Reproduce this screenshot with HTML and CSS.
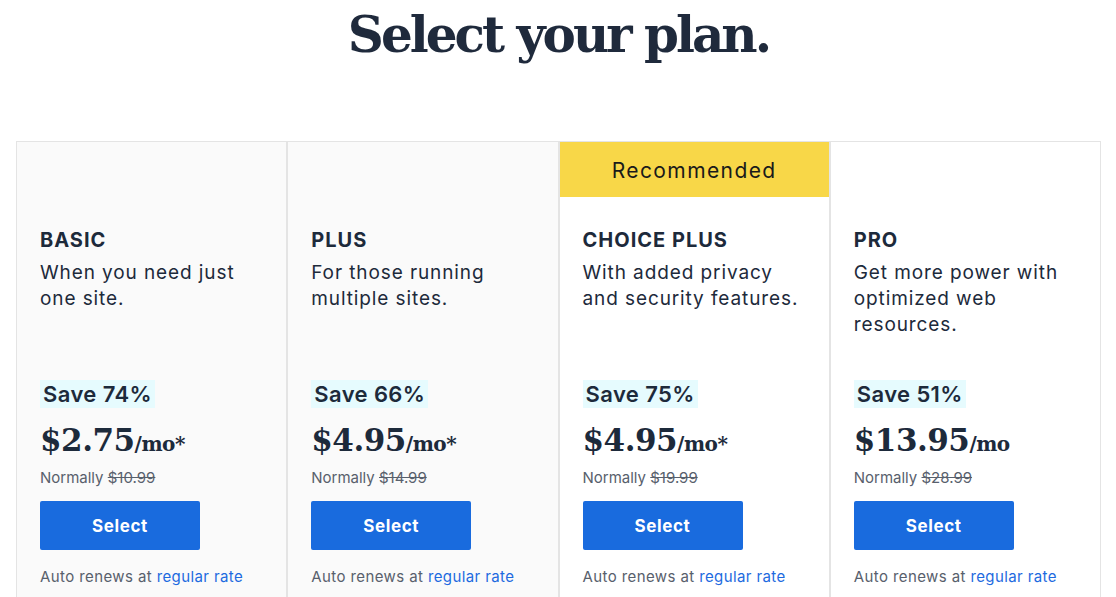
FILE: index.html
```html
<!DOCTYPE html>
<html lang="en">
<head>
    <meta charset="UTF-8">
    <meta name="viewport" content="width=device-width, initial-scale=1.0">
    <title>Select your plan</title>
    <link rel="stylesheet" href="styles.css">
</head>
<body>
    <h1 class="page-title">Select your plan.</h1>

    <!-- Plan cards -->
    <div class="plans">
        <div class="plan plan-muted">
            <div class="plan-top"></div>
            <div class="plan-body">
                <h2 class="plan-name">BASIC</h2>
                <p class="plan-desc">When you need just one site.</p>
                <span class="save">Save 74%</span>
                <div class="price">$2.75<span class="per">/mo*</span></div>
                <div class="normally">Normally <s>$10.99</s></div>
                <button class="select-btn">Select</button>
                <div class="renew">Auto renews at <a href="#">regular rate</a></div>
            </div>
        </div>

        <div class="plan plan-muted">
            <div class="plan-top"></div>
            <div class="plan-body">
                <h2 class="plan-name">PLUS</h2>
                <p class="plan-desc">For those running multiple sites.</p>
                <span class="save">Save 66%</span>
                <div class="price">$4.95<span class="per">/mo*</span></div>
                <div class="normally">Normally <s>$14.99</s></div>
                <button class="select-btn">Select</button>
                <div class="renew">Auto renews at <a href="#">regular rate</a></div>
            </div>
        </div>

        <div class="plan">
            <div class="plan-top recommended">Recommended</div>
            <div class="plan-body">
                <h2 class="plan-name">CHOICE PLUS</h2>
                <p class="plan-desc">With added privacy and security features.</p>
                <span class="save">Save 75%</span>
                <div class="price">$4.95<span class="per">/mo*</span></div>
                <div class="normally">Normally <s>$19.99</s></div>
                <button class="select-btn">Select</button>
                <div class="renew">Auto renews at <a href="#">regular rate</a></div>
            </div>
        </div>

        <div class="plan">
            <div class="plan-top"></div>
            <div class="plan-body">
                <h2 class="plan-name">PRO</h2>
                <p class="plan-desc">Get more power with optimized web resources.</p>
                <span class="save">Save 51%</span>
                <div class="price">$13.95<span class="per">/mo</span></div>
                <div class="normally">Normally <s>$28.99</s></div>
                <button class="select-btn">Select</button>
                <div class="renew">Auto renews at <a href="#">regular rate</a></div>
            </div>
        </div>
    </div>
</body>
</html>
```

FILE: styles.css
```css
* {
    box-sizing: border-box;
}

body {
    margin: 0;
    padding: 0 15px 0 16px;
    font-family: Inter, "Noto Sans", sans-serif;
    color: #1d2a3b;
    background: #fff;
}

.page-title {
    margin: 0;
    padding-top: 2px;
    height: 141px;
    text-align: center;
    font-family: "DejaVu Serif", serif;
    font-size: 50px;
    font-weight: 900;
    line-height: 66px;
    letter-spacing: -3px;
    color: #1f2a3c;
}

/* four columns side by side */
.plans {
    display: grid;
    grid-template-columns: repeat(4, 1fr);
}

.plan {
    border: 1px solid #e4e4e4;
    background: #fff;
}

.plan-muted {
    background: #fafafa;
}

.plan-top {
    height: 55px;
}

.recommended {
    padding-top: 2px;
    background: #f8d748;
    color: #1a1a1a;
    font-size: 21px;
    line-height: 53px;
    letter-spacing: 1.4px;
    text-align: center;
}

.plan-body {
    padding: 31px 23px 10px 23px;
}

.plan-name {
    margin: 0;
    font-size: 20px;
    line-height: 24px;
    font-weight: 700;
    letter-spacing: 1px;
}

.plan-desc {
    margin: 8px 0 0 0;
    min-height: 78px;
    font-size: 19px;
    line-height: 26px;
    letter-spacing: 0.9px;
}

.save {
    display: inline-block;
    margin-top: 42px;
    padding: 0 3px;
    background: #e6fbfe;
    font-size: 22px;
    line-height: 28px;
    font-weight: 600;
    letter-spacing: 0.4px;
}

.price {
    margin-top: 14px;
    font-family: "DejaVu Serif", serif;
    font-weight: bold;
    font-size: 31px;
    line-height: 36px;
    letter-spacing: -0.5px;
}

.per {
    font-size: 20px;
}

.normally {
    margin-top: 6px;
    font-size: 15px;
    line-height: 20px;
    color: #58606c;
}

.select-btn {
    display: block;
    margin-top: 13px;
    width: 160px;
    height: 49px;
    border: 0;
    border-radius: 2px;
    background: #196bde;
    color: #fff;
    font-family: inherit;
    font-size: 17px;
    font-weight: 700;
    letter-spacing: 0.6px;
}

.renew {
    margin-top: 17px;
    font-size: 15px;
    line-height: 20px;
    letter-spacing: 0.4px;
    color: #58606c;
}

.renew a {
    color: #1d6ae0;
    text-decoration: none;
}
```
